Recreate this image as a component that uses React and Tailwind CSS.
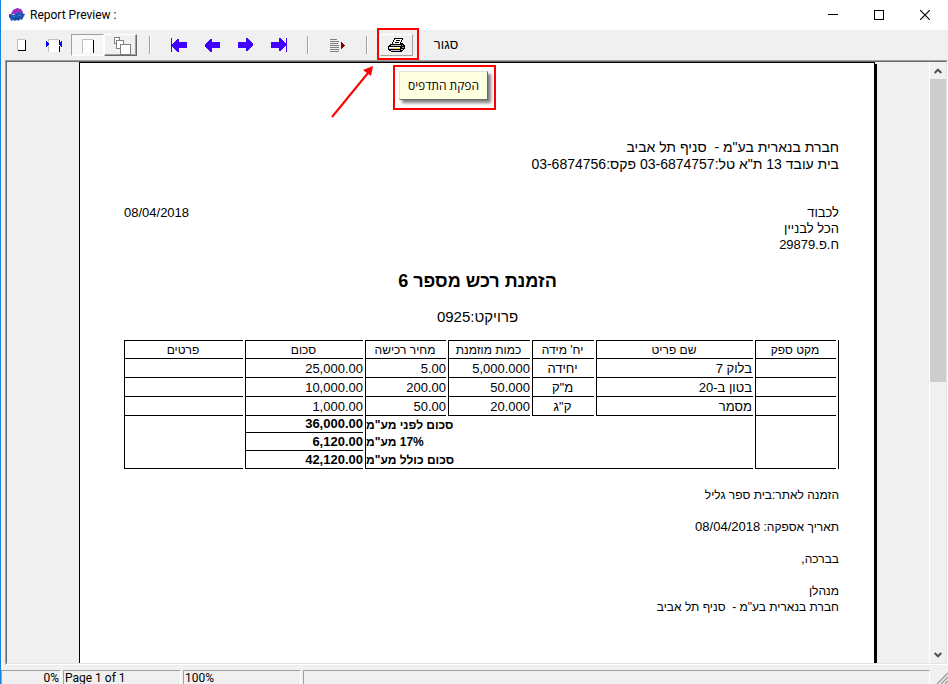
import React from 'react';

const sans = "font-['Liberation_Sans',Arial,sans-serif]";
const ui = "font-['Roboto','Open_Sans',sans-serif]";
const hint = "font-['Open_Sans','Liberation_Sans',sans-serif]";

function AppIcon() {
  return (
    <svg width="16" height="14" viewBox="0 0 16 14">
      <path d="M2 6 4 2 8 0l4 1 2 3v2H2z" fill="#a32bc4" />
      <path d="M0 6h2l3 1 2-2 3-1 2 1 4 1-1 2-1 2-1 2-2-1-1 2-2-1-2 1-2-1-2 1-1-3-2-1z" fill="#1f55b5" />
      <path d="M0 6h3v1H0zM7 4h5v1H7z" fill="#5f4ac8" />
      <path d="M4 8h2v1H4zM9 7h3v1H9z" fill="#3a78d8" />
      <path d="M5 10h6v1H5z" fill="#123c8c" />
    </svg>
  );
}

function PageIcon() {
  return (
    <svg width="31" height="20" viewBox="0 0 31 20" shapeRendering="crispEdges">
      <path d="M11 4h8v11h-8z" fill="#fff" />
      <path d="M11 4h8v1h-7v10h-1z" fill="#c0c0c0" />
      <path d="M19 5h1v11h-8v-1h7z" fill="#000" />
    </svg>
  );
}

function FitWidthIcon() {
  return (
    <svg width="31" height="20" viewBox="0 0 31 20" shapeRendering="crispEdges">
      <path d="M9 4h11v13H9z" fill="#fff" />
      <path d="M9 4h11v1H10v12H9z" fill="#c0c0c0" />
      <path d="M20 5h1v3h-1zM20 11h1v6h-1z" fill="#000" />
      <path d="M7 6h1v1h1v1h1v2H9v1H8v1H7zM23 6v6h-1v-1h-1v-1h-1V8h1V7h1V6z" fill="#0000ff" />
    </svg>
  );
}

function WholePageIcon() {
  return (
    <svg width="31" height="20" viewBox="0 0 31 20" shapeRendering="crispEdges">
      <path d="M10 4h11v14H10z" fill="#fff" />
      <path d="M10 4h11v1H11v13h-1z" fill="#c0c0c0" />
      <path d="M21 5h1v13h-1z" fill="#000" />
    </svg>
  );
}

function ThumbnailsIcon() {
  return (
    <svg width="31" height="20" viewBox="0 0 31 20" shapeRendering="crispEdges">
      <g fill="#fff" stroke="#808080">
        <path d="M9.500 2.500h5v6h-5z" />
        <path d="M11.500 5.500h7v8h-7z" />
        <path d="M15.500 9.500h10v10h-10z" />
      </g>
    </svg>
  );
}

function ArrowIcon({ forward, bar }) {
  return (
    <svg
      width="17"
      height="14"
      viewBox="0 0 17 14"
      shapeRendering="crispEdges"
      className={forward ? 'rotate-180' : ''}
    >
      <path
        d="M1 6h1V5h1V4h1V3h1V2h1V1h2v3h8v6H8v4H6v-1H5v-1H4v-1H3v-1H2V9H1z"
        fill="#4000ff"
      />
      {bar && <path d="M0 0h1v14H0z" fill="#4000ff" />}
    </svg>
  );
}

function GotoIcon() {
  return (
    <svg width="17" height="14" viewBox="0 0 17 14" shapeRendering="crispEdges">
      <path d="M1 1h7v1H1zM1 3h9v1H1zM1 5h8v1H1zM1 7h9v1H1zM1 9h9v1H1zM1 11h9v1H1zM1 13h9v1H1z" fill="#808080" />
      <path d="M12 4h1v1h1v1h1v1h1v1h-1v1h-1v1h-1v1h-1z" fill="#800000" />
    </svg>
  );
}

function PrinterIcon() {
  return (
    <svg width="17" height="16" viewBox="0 0 17 16" shapeRendering="crispEdges">
      <path d="M6 1h9v2h-1v2h-1v1h2v1h1v1h1v4h-1v1h-1v1h-1v1H3v-1H1v-1H0V9h1V8h1V7h2V5h1V3h1z" fill="#000" />
      <path d="M7 2h7v1h-1v2h-1v2H5V5h1V3h1z" fill="#fff" />
      <path d="M8 3h4v1H8zM7 5h4v1H7z" fill="#000" />
      <path d="M3 8h10v1H3z" fill="#c0c0c0" />
      <path d="M1 10h11v1H1z" fill="#fff" />
      <path d="M1 11h11v1H1zM3 13h9v1H3z" fill="#c0c0c0" />
      <path d="M14 8h1v1h-1zM14 10h2v1h-2zM13 12h2v1h-2z" fill="#a0a0a0" />
      <path d="M7 11h4v1H7z" fill="#ffe000" />
    </svg>
  );
}

function ToolButton({ label, look = 'border-transparent', children }) {
  return (
    <button
      type="button"
      aria-label={label}
      className={`flex h-[22px] w-[33px] shrink-0 items-center justify-center border ${look}`}
    >
      {children}
    </button>
  );
}

function Separator() {
  return (
    <div className="flex w-[26px] shrink-0 justify-center">
      <div className="h-[18px] w-[2px] border-l border-r border-l-[#a0a0a0] border-r-white" />
    </div>
  );
}

function TitleBar() {
  return (
    <header className="flex h-[30px] shrink-0 items-center bg-white pl-2">
      <AppIcon />
      <h1 className={`ml-[5px] flex-1 whitespace-pre text-[12px] leading-4 text-black ${ui}`}>Report Preview :</h1>
      <button type="button" aria-label="Minimize" className="flex h-[30px] w-[46px] items-center justify-center">
        <svg width="10" height="10" shapeRendering="crispEdges">
          <path d="M0 4h10v1H0z" />
        </svg>
      </button>
      <button type="button" aria-label="Maximize" className="flex h-[30px] w-[46px] items-center justify-center">
        <svg width="10" height="10" shapeRendering="crispEdges">
          <path d="M.5.5h9v9h-9z" fill="none" stroke="#000" />
        </svg>
      </button>
      <button type="button" aria-label="Close" className="flex h-[30px] w-[46px] items-center justify-center">
        <svg width="10" height="10">
          <path d="M0 0l10 10M10 0L0 10" fill="none" stroke="#000" strokeWidth="1.2" />
        </svg>
      </button>
    </header>
  );
}

function Toolbar() {
  return (
    <div role="toolbar" className="flex h-[30px] shrink-0 items-center pl-1">
      <ToolButton label="Actual size"><PageIcon /></ToolButton>
      <ToolButton label="Fit width"><FitWidthIcon /></ToolButton>
      <ToolButton
        label="Whole page"
        look="bg-[#f7f7f7] border-t-[#a0a0a0] border-l-[#a0a0a0] border-b-white border-r-white"
      >
        <WholePageIcon />
      </ToolButton>
      <ToolButton
        label="Thumbnails"
        look="border-t-white border-l-white border-b-[#696969] border-r-[#696969] shadow-[inset_-1px_-1px_0_#a0a0a0]"
      >
        <ThumbnailsIcon />
      </ToolButton>
      <Separator />
      <ToolButton label="First page"><ArrowIcon bar /></ToolButton>
      <ToolButton label="Previous page"><ArrowIcon /></ToolButton>
      <ToolButton label="Next page"><ArrowIcon forward /></ToolButton>
      <ToolButton label="Last page"><ArrowIcon forward bar /></ToolButton>
      <Separator />
      <ToolButton label="Go to page"><GotoIcon /></ToolButton>
      <Separator />
      <div className="relative">
        <ToolButton label="הפקת התדפיס" look="border-t-white border-l-white border-b-[#a0a0a0] border-r-[#a0a0a0]">
          <PrinterIcon />
        </ToolButton>
        <PrintCallout />
      </div>
      <button type="button" dir="rtl" className={`ml-4 h-[22px] w-[34px] text-[13px] leading-5 text-black ${sans}`}>
        סגור
      </button>
    </div>
  );
}

// highlight frame, pointer and hint that float over the report
function PrintCallout() {
  return (
    <div className="pointer-events-none absolute -left-[3px] -top-[6px] z-10">
      <div className="h-8 w-[42px] border-2 border-[#fe0000]" />
      <svg width="44" height="54" className="absolute -left-[46px] top-[37px]">
        <path d="M1 52 37 8" stroke="#fe0000" strokeWidth="2" />
        <path d="M42 1 40 11 32 5z" fill="#fe0000" />
      </svg>
      <div className="absolute left-4 top-[37px] border-2 border-[#fe0000] bg-white p-1">
        <div
          role="tooltip"
          dir="rtl"
          className={`mb-1 mr-0.5 flex h-[29px] w-[89px] items-center justify-center whitespace-nowrap border border-[#e3e3e3] border-b-[#696969] border-r-[#696969] bg-[#ffffe1] text-[12px] text-black shadow-[3px_3px_3px_#808080] ${hint}`}
        >
          הפקת התדפיס
        </div>
      </div>
    </div>
  );
}

const columns = [
  { title: 'פרטים', width: 'w-[119px]' },
  { title: 'סכום', width: 'w-[118px]' },
  { title: 'מחיר רכישה', width: 'w-[81px]' },
  { title: 'כמות מוזמנת', width: 'w-[82px]' },
  { title: "יח' מידה", width: 'w-[62px]' },
  { title: 'שם פריט', width: '' },
  { title: 'מקט ספק', width: 'w-[81px]' },
];

const items = [
  { name: 'בלוק 7', unit: 'יחידה', qty: '5,000.000', price: '5.00', sum: '25,000.00' },
  { name: 'בטון ב-20', unit: 'מ"ק', qty: '50.000', price: '200.00', sum: '10,000.00' },
  { name: 'מסמר', unit: 'ק"ג', qty: '20.000', price: '50.00', sum: '1,000.00' },
];

const totals = [
  { label: 'סכום לפני מע"מ', sum: '36,000.00', height: 'h-[17px]' },
  { label: '17% מע"מ', sum: '6,120.00', height: 'h-[18px]' },
  { label: 'סכום כולל מע"מ', sum: '42,120.00', height: 'h-[18px]' },
];

const cell = 'border-l border-b border-black p-0';

function OrderTable() {
  return (
    <div className="-mx-0.5">
      <table className="w-full table-fixed border-separate border-spacing-x-[2px] border-spacing-y-0 text-[13px] leading-4">
        <thead>
          <tr className="h-[19px]">
            {columns.map((c) => (
              <th key={c.title} dir="rtl" className={`whitespace-nowrap border-t text-center text-[12px] font-normal ${cell} ${c.width}`}>
                {c.title}
              </th>
            ))}
            <td className="w-px border-l border-black p-0" />
          </tr>
        </thead>
        <tbody>
          {items.map((item) => (
            <tr key={item.name} className="h-[19px] align-bottom">
              <td className={cell} />
              <td className={`text-right ${cell}`}>{item.sum}</td>
              <td className={`text-right ${cell}`}>{item.price}</td>
              <td className={`text-right ${cell}`}>{item.qty}</td>
              <td dir="rtl" className={`text-center ${cell}`}>{item.unit}</td>
              <td dir="rtl" className={`text-right ${cell}`}>{item.name}</td>
              <td className={cell} />
              <td className="border-l border-black p-0" />
            </tr>
          ))}
          {totals.map((total, i) => (
            <tr key={total.label} className={`font-bold ${total.height}`}>
              {i === 0 && <td rowSpan={3} className={cell} />}
              <td className={`text-right ${cell}`}>{total.sum}</td>
              <td
                colSpan={4}
                dir="rtl"
                className={`border-l border-black p-0 pl-px text-left text-[12px] ${i === 2 ? 'border-b' : ''}`}
              >
                {total.label}
              </td>
              {i === 0 && <td rowSpan={3} className={cell} />}
              {i === 0 && <td rowSpan={3} className="border-l border-black p-0" />}
            </tr>
          ))}
        </tbody>
      </table>
    </div>
  );
}

function ReportPage() {
  return (
    <main className="ml-[72px] mr-[52px] flex flex-1">
      <article
        lang="he"
        className={`flex-1 border-l border-r border-t border-black bg-white pl-11 pr-[35px] pt-[76px] text-[13px] leading-4 text-black ${sans}`}
      >
        <div dir="rtl" className="whitespace-pre text-[14px] leading-[17px]">
          <p>חברת בנארית בע"מ -  סניף תל אביב</p>
          <p>בית עובד 13 ת"א טל:03-6874757 פקס:03-6874756</p>
        </div>
        <div className="mt-8 flex items-start justify-between">
          <time dateTime="2018-04-08">08/04/2018</time>
          <div dir="rtl">
            <p>לכבוד</p>
            <p>הכל לבניין</p>
            <p>ח.פ.29879</p>
          </div>
        </div>
        <h2 dir="rtl" className="mt-4 pr-2 text-center text-[18px] font-bold leading-6">
          הזמנת רכש מספר 6
        </h2>
        <p dir="rtl" className="mb-[13px] mt-[14px] pr-2 text-center text-[15px] leading-5">פרויקט:0925</p>
        <OrderTable />
        <div dir="rtl" className="mt-[18px] flex flex-col gap-4 text-[12px] leading-4">
          <p>הזמנה לאתר:בית ספר גליל</p>
          <p>תאריך אספקה: <time dateTime="2018-04-08" className="text-[13px]">08/04/2018</time></p>
          <p>בברכה,</p>
          <div className="whitespace-pre">
            <p>מנהלן</p>
            <p>חברת בנארית בע"מ -  סניף תל אביב</p>
          </div>
        </div>
      </article>
      <div className="mt-0.5 w-0.5 bg-black" />
    </main>
  );
}

function ScrollBar() {
  return (
    <div className="flex w-[17px] shrink-0 flex-col border-l border-white">
      <button type="button" aria-label="Scroll up" className="flex h-[17px] items-center justify-center">
        <svg width="8" height="6">
          <path d="M.7 5 4 1.700 7.300 5" fill="none" stroke="#505050" strokeWidth="2" />
        </svg>
      </button>
      <div className="flex-1">
        <div className="h-[53.5%] bg-[#cdcdcd]" />
      </div>
      <button type="button" aria-label="Scroll down" className="flex h-[17px] items-center justify-center">
        <svg width="8" height="6">
          <path d="M.7 1 4 4.300 7.300 1" fill="none" stroke="#505050" strokeWidth="2" />
        </svg>
      </button>
    </div>
  );
}

function StatusBar() {
  const panel = 'border-l border-t border-r border-l-[#a0a0a0] border-t-[#a0a0a0] border-r-white px-px pt-px';
  return (
    <footer className={`flex h-[19px] shrink-0 gap-0.5 pt-[5px] text-[12px] leading-[13px] text-black ${ui}`}>
      <div className={`w-[60px] text-right ${panel}`}>0%</div>
      <div className={`w-[118px] ${panel}`}>Page 1 of 1</div>
      <div className={`w-[118px] ${panel}`}>100%</div>
      <div className={`flex-1 ${panel}`} />
      <svg width="16" height="14" className="self-end">
        <path d="M5 14 16 3M9 14l7-7M13 14l3-3" stroke="#a0a0a0" strokeWidth="1.500" />
      </svg>
    </footer>
  );
}

export default function App() {
  return (
    <div className="flex h-screen flex-col overflow-hidden border-l border-[#1883d7] bg-[#f0f0f0]">
      <TitleBar />
      <Toolbar />
      <div className="ml-1 flex min-h-0 flex-1 border border-b-white border-l-[#a0a0a0] border-r-white border-t-[#a0a0a0]">
        <div className="flex min-w-0 flex-1 overflow-hidden border border-b-[#e3e3e3] border-l-[#696969] border-r-[#e3e3e3] border-t-[#696969]">
          <ReportPage />
          <ScrollBar />
        </div>
      </div>
      <StatusBar />
    </div>
  );
}
